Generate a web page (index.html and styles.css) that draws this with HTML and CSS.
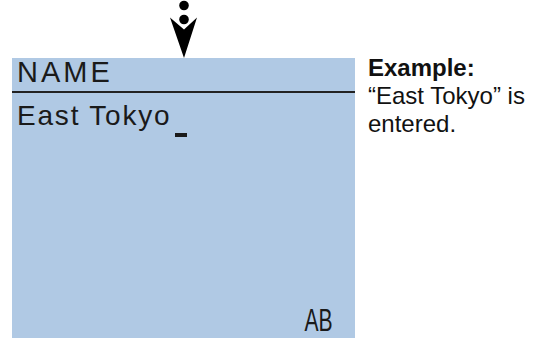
FILE: index.html
```html
<!DOCTYPE html>
<html lang="en">
<head>
    <meta charset="UTF-8">
    <title>Name Entry Example</title>
    <link rel="stylesheet" href="styles.css">
</head>
<body>
    <div class="figure">
        <div class="screen-col">
            <div class="arrow">
                <svg width="30" height="58" viewBox="0 0 30 58">
                    <circle cx="15" cy="5.5" r="4.8" fill="#000"/>
                    <circle cx="15" cy="19.5" r="4.8" fill="#000"/>
                    <polygon points="1,17.5 15,29.5 28,17.5 15,58" fill="#000"/>
                </svg>
            </div>
            <div class="lcd">
                <div class="lcd-title">NAME</div>
                <div class="lcd-input">East Tokyo<span class="cursor"></span></div>
                <div class="lcd-mode"><span>AB</span></div>
            </div>
        </div>
        <div class="note">
            <b>Example:</b><br>
            “East Tokyo” is<br>
            entered.
        </div>
    </div>
</body>
</html>
```

FILE: styles.css
```css
body {
    margin: 0;
    background: #fff;
    font-family: "Liberation Sans", Arial, sans-serif;
}
.figure {
    display: flex;
    width: 537px;
    height: 338px;
    overflow: hidden;
}
.screen-col {
    padding-left: 12px;
    display: flex;
    flex-direction: column;
}
.arrow {
    height: 58px;
    display: flex;
    justify-content: center;
}
.arrow svg {
    display: block;
}
.lcd {
    width: 343px;
    height: 280px;
    background: #b0c9e4;
    color: #1a1a1a;
    display: flex;
    flex-direction: column;
}
.lcd-title {
    font-size: 29px;
    line-height: 28px;
    letter-spacing: 3px;
    padding: 0 0 5px 5px;
    border-bottom: 2px solid #222;
}
.lcd-input {
    font-size: 28px;
    line-height: 28px;
    letter-spacing: 1.8px;
    padding-left: 5px;
    margin-top: 9px;
}
.cursor {
    display: inline-block;
    width: 12px;
    height: 4px;
    background: #1a1a1a;
    margin-left: 4px;
    vertical-align: -12px;
}
.lcd-mode {
    margin-top: auto;
    align-self: flex-end;
    padding: 0 22px 2px 0;
    font-size: 32px;
    line-height: 32px;
}
.lcd-mode span {
    display: inline-block;
    transform: scaleX(0.66);
    transform-origin: right center;
}
.note {
    padding: 54px 0 0 13px;
    font-size: 24px;
    line-height: 28px;
    color: #111;
    white-space: nowrap;
}
```
